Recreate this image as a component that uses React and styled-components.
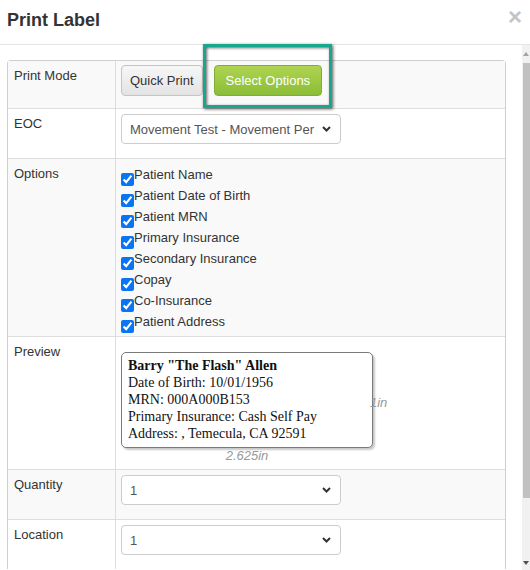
import styled, { createGlobalStyle } from "styled-components";

const GlobalStyle = createGlobalStyle`
    body {
        margin: 0;
        background: #fff;
        font-family: "Liberation Sans", Arial, sans-serif;
    }
`;

const Modal = styled.div`
    width: 530px;
    height: 570px;
    overflow: hidden;
    background: #fff;
    display: flex;
    flex-direction: column;
`;
const Header = styled.div`
    height: 44px;
    flex-shrink: 0;
    border-bottom: 1px solid #e5e5e5;
    display: flex;
    align-items: center;
    justify-content: space-between;
    padding: 0 8px 0 7px;
`;
const Title = styled.h4`
    margin: 0 0 3px;
    font-size: 18px;
    font-weight: 700;
    color: #333;
`;
const Close = styled.span`
    font-size: 24px;
    font-weight: 700;
    line-height: 1;
    color: #c4c4c4;
    margin-bottom: 10px;
`;
const Body = styled.div`
    flex: 1;
    display: flex;
    min-height: 0;
`;
const Content = styled.div`
    flex: 1;
    padding: 15px 16px 0 7px;
`;
const Scrollbar = styled.div`
    width: 8px;
    background: #f1f1f1;
    display: flex;
    flex-direction: column;
    align-items: flex-end;
`;
const ScrollArrow = styled.div`
    height: 18px;
    width: 8px;
    display: flex;
    align-items: ${(p) => (p.$down ? "flex-end" : "center")};
    justify-content: center;
    padding-bottom: ${(p) => (p.$down ? "5px" : "0")};
    box-sizing: border-box;
`;
const Thumb = styled.div`
    height: 435px;
    width: 7px;
    background: #c1c1c1;
`;
const Spacer = styled.div`
    flex: 1;
`;

const Table = styled.div`
    border: 1px solid #cfcfcf;
    border-bottom: none;
    border-radius: 4px 4px 0 0;
`;
const Row = styled.div`
    display: grid;
    grid-template-columns: 108px 1fr;
    background: ${(p) => (p.$alt ? "#f9f9f9" : "#fff")};
    & + & {
        border-top: 1px solid #dddddd;
    }
`;
const Label = styled.div`
    padding: 6px 6px;
    border-right: 1px solid #dddddd;
    font-size: 13px;
    line-height: 18px;
    color: #333;
`;
const Value = styled.div`
    padding: 5px 5px 0;
    font-size: 13px;
    color: #333;
`;

const ButtonGroup = styled.div`
    display: flex;
    gap: 11px;
    margin: -1px 0 12px;
`;
const Button = styled.button`
    height: 31px;
    padding: 0 ${(p) => (p.$primary ? "11px" : "8px")};
    border-radius: 4px;
    font-family: "Liberation Sans", Arial, sans-serif;
    font-size: 13px;
    cursor: pointer;
    color: ${(p) => (p.$primary ? "#fff" : "#333")};
    border: 1px solid ${(p) => (p.$primary ? "#7fae31" : "#c4c4c4")};
    background: ${(p) =>
        p.$primary
            ? "linear-gradient(#aed451, #8cbd38)"
            : "linear-gradient(#f7f7f7, #e3e3e3)"};
`;
const Highlight = styled.div`
    position: relative;
    display: flex;
`;
const HighlightFrame = styled.div`
    position: absolute;
    top: -21px;
    left: -11px;
    right: -10px;
    bottom: -12px;
    border: 3px solid #16a88d;
    box-shadow: 1px 1px 3px rgba(0, 0, 0, 0.65),
        inset 1px 1px 3px rgba(0, 0, 0, 0.6);
    pointer-events: none;
`;

const SelectWrap = styled.div`
    position: relative;
    width: 220px;
    margin-bottom: 14px;
`;
const Select = styled.select`
    appearance: none;
    width: 100%;
    height: 30px;
    border: 1px solid #cccccc;
    border-radius: 4px;
    background: #fff;
    padding: 0 24px 0 8px;
    font-family: "Liberation Sans", Arial, sans-serif;
    font-size: 13px;
    color: #555;
    outline: none;
`;
const Chevron = styled.svg`
    position: absolute;
    right: 10px;
    top: 12px;
    pointer-events: none;
`;

const OptionList = styled.div`
    display: flex;
    flex-direction: column;
    margin-bottom: 4px;
`;
const OptionItem = styled.label`
    display: flex;
    align-items: flex-start;
    height: 21px;
    line-height: 21px;
    font-size: 13px;
    color: #333;
`;
const Check = styled.input`
    width: 13px;
    height: 13px;
    margin: 9px 0 0;
    accent-color: #0a75f2;
`;

const PreviewArea = styled.div`
    display: flex;
    flex-direction: column;
    margin-top: 10px;
`;
const PreviewLine = styled.div`
    display: flex;
    align-items: center;
`;
const LabelCard = styled.div`
    width: 252px;
    height: 96px;
    box-sizing: border-box;
    border: 1px solid #7a7a7a;
    border-radius: 5px;
    box-shadow: 2px 2px 2px rgba(0, 0, 0, 0.22);
    padding: 4px 6px;
    font-family: "Liberation Serif", "Times New Roman", serif;
    font-size: 14px;
    line-height: 17px;
    color: #111;
    background: #fff;
`;
const Strong = styled.div`
    font-weight: 700;
`;
const Dim = styled.span`
    font-style: italic;
    font-size: 13px;
    color: #999;
    margin-left: -3px;
    margin-top: 4px;
`;
const DimBottom = styled.div`
    width: 252px;
    text-align: center;
    font-style: italic;
    font-size: 13px;
    line-height: 16px;
    color: #999;
    margin-bottom: 5px;
`;

const options = [
    "Patient Name",
    "Patient Date of Birth",
    "Patient MRN",
    "Primary Insurance",
    "Secondary Insurance",
    "Copay",
    "Co-Insurance",
    "Patient Address",
];

const Dropdown = ({ value }) => (
    <SelectWrap>
        <Select defaultValue={value}>
            <option>{value}</option>
        </Select>
        <Chevron width="9" height="6" viewBox="0 0 9 6">
            <path
                d="M1 1l3.5 3.5L8 1"
                fill="none"
                stroke="#333"
                strokeWidth="2"
            />
        </Chevron>
    </SelectWrap>
);

const App = () => {
    return (
        <Modal>
            <GlobalStyle />
            <Header>
                <Title>Print Label</Title>
                <Close>×</Close>
            </Header>
            <Body>
                <Content>
                    <Table>
                        <Row $alt>
                            <Label>Print Mode</Label>
                            <Value>
                                <ButtonGroup>
                                    <Button>Quick Print</Button>
                                    <Highlight>
                                        <Button $primary>Select Options</Button>
                                        <HighlightFrame />
                                    </Highlight>
                                </ButtonGroup>
                            </Value>
                        </Row>
                        <Row>
                            <Label>EOC</Label>
                            <Value>
                                <Dropdown value="Movement Test - Movement Per" />
                            </Value>
                        </Row>
                        <Row $alt>
                            <Label>Options</Label>
                            <Value>
                                <OptionList>
                                    {options.map((o) => (
                                        <OptionItem key={o}>
                                            <Check type="checkbox" defaultChecked />
                                            {o}
                                        </OptionItem>
                                    ))}
                                </OptionList>
                            </Value>
                        </Row>
                        <Row>
                            <Label>Preview</Label>
                            <Value>
                                <PreviewArea>
                                    <PreviewLine>
                                        <LabelCard>
                                            <Strong>Barry "The Flash" Allen</Strong>
                                            <div>Date of Birth: 10/01/1956</div>
                                            <div>MRN: 000A000B153</div>
                                            <div>Primary Insurance: Cash Self Pay</div>
                                            <div>Address: , Temecula, CA 92591</div>
                                        </LabelCard>
                                        <Dim>1in</Dim>
                                    </PreviewLine>
                                    <DimBottom>2.625in</DimBottom>
                                </PreviewArea>
                            </Value>
                        </Row>
                        <Row $alt>
                            <Label>Quantity</Label>
                            <Value>
                                <Dropdown value="1" />
                            </Value>
                        </Row>
                        <Row>
                            <Label>Location</Label>
                            <Value>
                                <Dropdown value="1" />
                            </Value>
                        </Row>
                    </Table>
                </Content>
                <Scrollbar>
                    <ScrollArrow>
                        <svg width="6" height="4" viewBox="0 0 6 4">
                            <path d="M3 0L6 4H0z" fill="#a3a3a3" />
                        </svg>
                    </ScrollArrow>
                    <Thumb />
                    <Spacer />
                    <ScrollArrow $down>
                        <svg width="6" height="4" viewBox="0 0 6 4">
                            <path d="M0 0h6L3 4z" fill="#505050" />
                        </svg>
                    </ScrollArrow>
                </Scrollbar>
            </Body>
        </Modal>
    );
};

export default App;
